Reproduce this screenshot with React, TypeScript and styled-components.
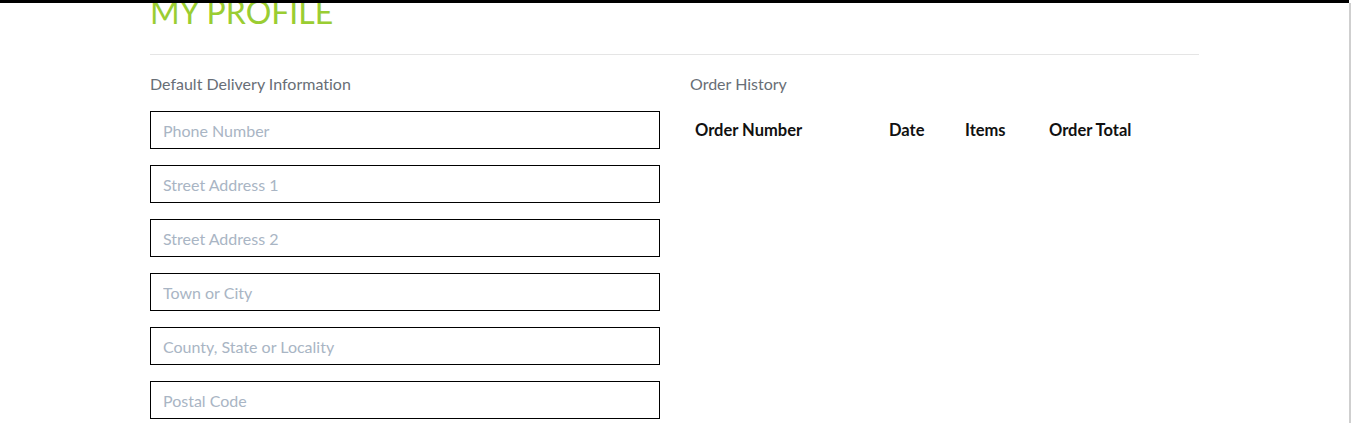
import React from "react";
import styled, { createGlobalStyle } from "styled-components";

const GlobalStyle = createGlobalStyle`
  html, body { margin: 0; padding: 0; background: #fff; }
  body {
    font-family: Lato, "Open Sans", sans-serif;
    overflow: hidden;
    font-variant-ligatures: no-common-ligatures;
  }
  * { box-sizing: border-box; }
`;

const Page = styled.div`
  display: flex;
  min-height: 423px;
`;

const Main = styled.main`
  flex: 1;
  overflow: hidden;
`;

const ScrollEdge = styled.div`
  width: 2px;
  background: #cfcfcf;
  margin-top: 3px;
`;

const TopBar = styled.div`
  position: fixed;
  top: 0;
  left: 0;
  right: 2px;
  height: 3px;
  background: #000;
`;

const Container = styled.div`
  width: 1049px;
  margin: 0 auto;
`;

const Title = styled.h1`
  margin: -7px 0 0;
  font-size: 32px;
  line-height: 38px;
  font-weight: 400;
  color: #9acd32;
  text-transform: uppercase;
`;

const Divider = styled.hr`
  margin: 23px 0 0;
  border: 0;
  border-top: 1px solid #e5e5e5;
`;

const Columns = styled.div`
  display: grid;
  grid-template-columns: 510px 1fr;
  column-gap: 30px;
  padding-top: 19px;
`;

const Column = styled.section`
  display: flex;
  flex-direction: column;
`;

const SectionLabel = styled.h2`
  margin: 0 0 18px;
  font-size: 16px;
  line-height: 19px;
  font-weight: 400;
  color: #686e76;
`;

const Fields = styled.div`
  display: flex;
  flex-direction: column;
  gap: 16px;
`;

const Field = styled.input`
  width: 100%;
  height: 38px;
  border: 1px solid #000;
  border-radius: 0;
  padding: 1px 12px 0;
  font-family: Lato, sans-serif;
  font-size: 16px;
  color: #333;
  outline: none;
  font-variant-ligatures: no-common-ligatures;
  &::placeholder { color: #a9b5c4; }
`;

const Table = styled.table`
  border-collapse: collapse;
  table-layout: fixed;
  width: 100%;
`;

const Th = styled.th<{ $w?: number }>`
  ${(p) => (p.$w ? `width: ${p.$w}px;` : "")}
  text-align: left;
  padding: 2px 5px 0;
  height: 36px;
  font-size: 16.5px;
  font-weight: 700;
  color: #111;
`;

const fields = [
  "Phone Number",
  "Street Address 1",
  "Street Address 2",
  "Town or City",
  "County, State or Locality",
  "Postal Code",
];

export default function App() {
  return (
    <>
      <GlobalStyle />
      <TopBar />
      <Page>
        <Main>
          <Container>
            <Title>My Profile</Title>
            <Divider />
            <Columns>
              <Column>
                <SectionLabel>Default Delivery Information</SectionLabel>
                <Fields>
                  {fields.map((f) => (
                    <Field key={f} placeholder={f} />
                  ))}
                </Fields>
              </Column>
              <Column>
                <SectionLabel>Order History</SectionLabel>
                <Table>
                  <thead>
                    <tr>
                      <Th $w={194}>Order Number</Th>
                      <Th $w={76}>Date</Th>
                      <Th $w={84}>Items</Th>
                      <Th>Order Total</Th>
                    </tr>
                  </thead>
                </Table>
              </Column>
            </Columns>
          </Container>
        </Main>
        <ScrollEdge />
      </Page>
    </>
  );
}
